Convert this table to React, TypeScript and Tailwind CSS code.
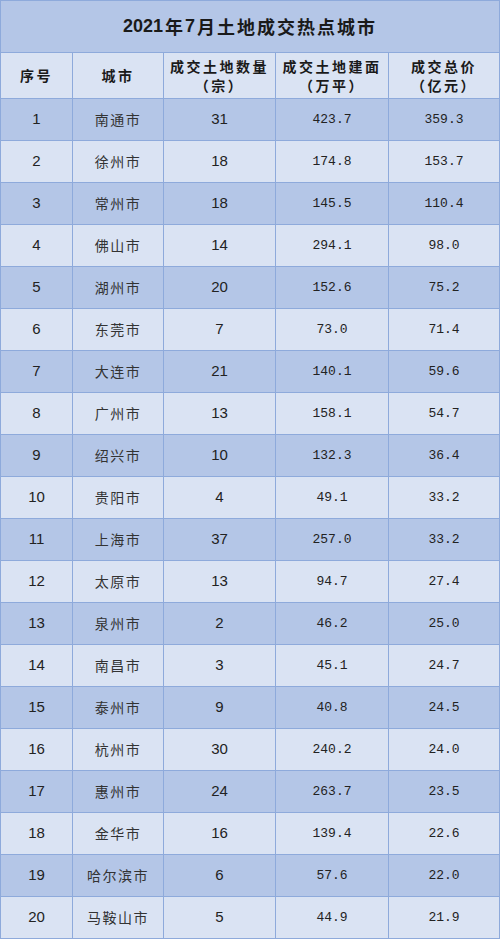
import React from "react";

const rows: [string, string, string, string, string][] = [
  ["1", "南通市", "31", "423.7", "359.3"],
  ["2", "徐州市", "18", "174.8", "153.7"],
  ["3", "常州市", "18", "145.5", "110.4"],
  ["4", "佛山市", "14", "294.1", "98.0"],
  ["5", "湖州市", "20", "152.6", "75.2"],
  ["6", "东莞市", "7", "73.0", "71.4"],
  ["7", "大连市", "21", "140.1", "59.6"],
  ["8", "广州市", "13", "158.1", "54.7"],
  ["9", "绍兴市", "10", "132.3", "36.4"],
  ["10", "贵阳市", "4", "49.1", "33.2"],
  ["11", "上海市", "37", "257.0", "33.2"],
  ["12", "太原市", "13", "94.7", "27.4"],
  ["13", "泉州市", "2", "46.2", "25.0"],
  ["14", "南昌市", "3", "45.1", "24.7"],
  ["15", "泰州市", "9", "40.8", "24.5"],
  ["16", "杭州市", "30", "240.2", "24.0"],
  ["17", "惠州市", "24", "263.7", "23.5"],
  ["18", "金华市", "16", "139.4", "22.6"],
  ["19", "哈尔滨市", "6", "57.6", "22.0"],
  ["20", "马鞍山市", "5", "44.9", "21.9"],
];

const cjk = "font-['Noto_Sans_CJK_SC',sans-serif]";
const sans = "font-['Liberation_Sans',Arial,sans-serif]";
const mono = "font-['Liberation_Mono',monospace]";

export default function App() {
  return (
    <div className="w-[500px] h-[939px] bg-white">
      <div className="grid grid-cols-[71px_90px_111px_112px_110px] grid-rows-[51px_45px_repeat(20,41px)] gap-px p-px bg-[#8eaadb]">
        <div
          className={`col-span-5 bg-[#b4c6e7] flex items-center justify-center text-[18px] font-bold text-[#1a1a1a] ${cjk}`}
        >
          <span className={sans}>2021</span>
          <span className="tracking-[2px] ml-[2px]">年</span>
          <span className={sans}>7</span>
          <span className="tracking-[2px] ml-[2px]">月土地成交热点城市</span>
        </div>
        {[
          ["序号"],
          ["城市"],
          ["成交土地数量", "（宗）"],
          ["成交土地建面", "（万平）"],
          ["成交总价", "（亿元）"],
        ].map((lines, i) => (
          <div
            key={i}
            className={`bg-[#dae3f3] flex flex-col items-center justify-center text-[14px] font-bold leading-[19px] tracking-[2.5px] text-[#1a1a1a] ${cjk}`}
          >
            {lines.map((l, j) => (
              <span key={j}>{l}</span>
            ))}
          </div>
        ))}
        {rows.map((r, idx) => {
          const bg = idx % 2 === 0 ? "bg-[#b4c6e7]" : "bg-[#dae3f3]";
          return (
            <React.Fragment key={idx}>
              <div className={`${bg} flex items-center justify-center text-[15px] text-[#222] ${sans}`}>
                {r[0]}
              </div>
              <div className={`${bg} flex items-center justify-center text-[14px] tracking-[1.5px] text-[#333] ${cjk}`}>
                {r[1]}
              </div>
              <div className={`${bg} flex items-center justify-center text-[15px] text-[#222] ${sans}`}>
                {r[2]}
              </div>
              <div className={`${bg} flex items-center justify-center text-[13px] text-[#222] ${mono}`}>
                {r[3]}
              </div>
              <div className={`${bg} flex items-center justify-center text-[13px] text-[#222] ${mono}`}>
                {r[4]}
              </div>
            </React.Fragment>
          );
        })}
      </div>
    </div>
  );
}
